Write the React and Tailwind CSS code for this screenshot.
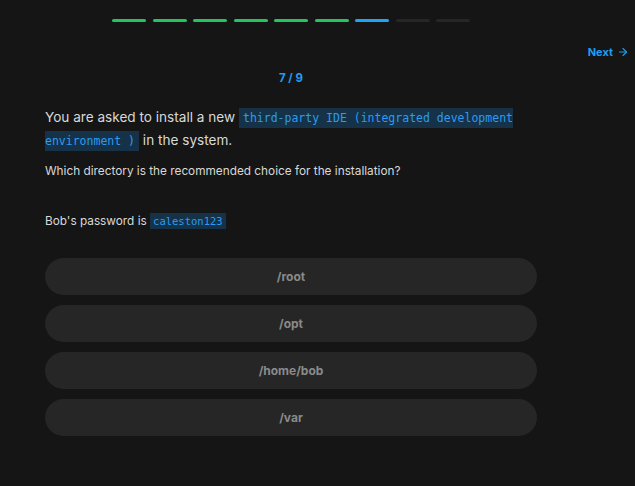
import React from "react";

export default function App() {
  const bars = ["g", "g", "g", "g", "g", "g", "b", "n", "n"];
  const opts = ["/root", "/opt", "/home/bob", "/var"];
  return (
    <div
      className="w-full min-h-[486px] bg-[#151515] text-[#d6d6d6]"
      style={{ fontFamily: "Inter, 'Noto Sans', sans-serif" }}
    >
      <div className="w-[582px] flex justify-center gap-[6.5px] pt-[19px]">
        {bars.map((b, i) => (
          <div
            key={i}
            className={
              "w-[34px] h-[3px] rounded-full " +
              (b === "g" ? "bg-[#22c55e]" : b === "b" ? "bg-[#1ea4f5]" : "bg-[#262626]")
            }
          />
        ))}
      </div>
      <div className="flex justify-end pr-[6px] mt-[23px]">
        <div className="flex items-center gap-[4px] text-[11px] font-bold text-[#1e9df2] leading-[14px]">
          <span>Next</span>
          <svg width="12" height="12" viewBox="0 0 24 24" fill="none" stroke="currentColor" strokeWidth="2.2" strokeLinecap="round" strokeLinejoin="round">
            <path d="M5 12h14" />
            <path d="M12 5l7 7-7 7" />
          </svg>
        </div>
      </div>
      <div className="w-[582px] px-[45px]">
        <div className="text-center text-[11.5px] font-bold text-[#1e9df2] mt-[12px] leading-[14px]">7 / 9</div>
        <p className="mt-[21px] text-[13.6px] leading-[23px] text-[#d9d9d9]">
          You are asked to install a new{" "}
          <code
            className="bg-[#163248] text-[#2b9cf0] text-[11.5px] leading-[14px] px-[4px] py-[3px]"
            style={{ fontFamily: "'DejaVu Sans Mono', monospace" }}
          >
            third-party IDE (integrated development environment )
          </code>{" "}
          in the system.
        </p>
        <p className="mt-[11px] text-[11.8px] leading-[16px] text-[#d9d9d9]">
          Which directory is the recommended choice for the installation?
        </p>
        <p className="mt-[34px] text-[11.8px] leading-[16px] text-[#d9d9d9]">
          Bob's password is{" "}
          <code
            className="bg-[#163248] text-[#2b9cf0] text-[10.5px] leading-[13px] px-[3px] py-[2px]"
            style={{ fontFamily: "'DejaVu Sans Mono', monospace" }}
          >
            caleston123
          </code>
        </p>
        <div className="mt-[29px] flex flex-col gap-[10px]">
          {opts.map((o) => (
            <div
              key={o}
              className="h-[37px] rounded-full bg-[#262626] flex items-center justify-center text-[12px] font-bold text-[#8a8a8a]"
            >
              {o}
            </div>
          ))}
        </div>
      </div>
    </div>
  );
}
